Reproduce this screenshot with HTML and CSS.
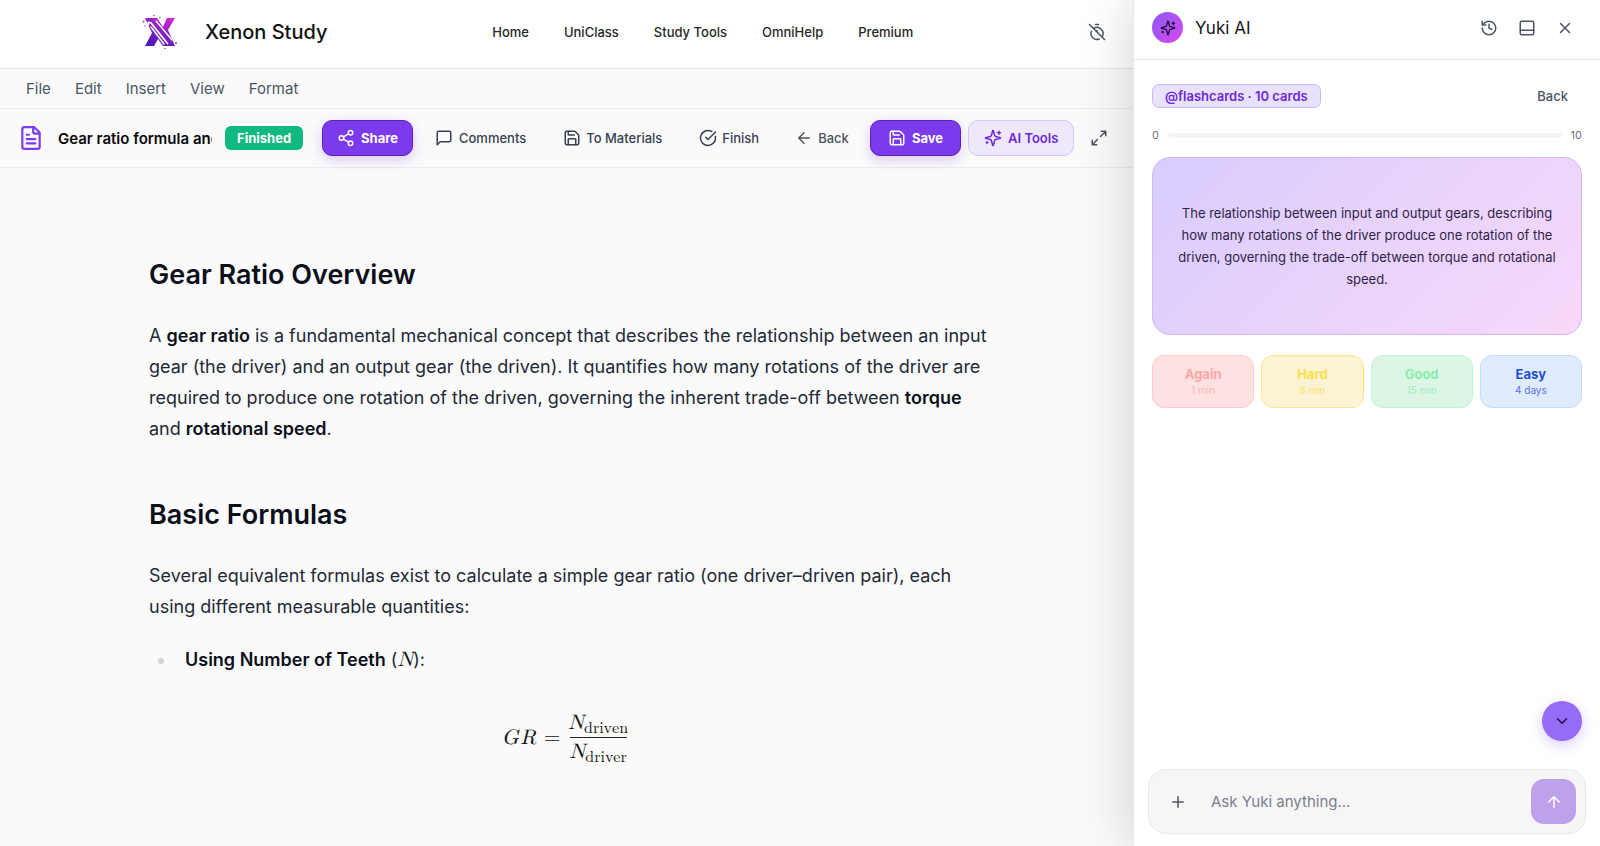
FILE: index.html
```html
<!DOCTYPE html>
<html lang="en">
<head>
<meta charset="utf-8">
<meta name="viewport" content="width=device-width, initial-scale=1">
<title>Xenon Study</title>
<link rel="stylesheet" href="styles.css">
</head>
<body>
<svg class="defs" aria-hidden="true">
  <symbol id="sparkles" viewBox="0 0 24 24"><path d="M9.9 15.5A2 2 0 0 0 8.5 14.1l-6.1-1.6a.5.5 0 0 1 0-1L8.500 9.900A2 2 0 0 0 9.900 8.500l1.600-6.100a.5.5 0 0 1 1 0L14.100 8.500A2 2 0 0 0 15.500 9.900l6.100 1.600a.5.5 0 0 1 0 1L15.500 14.100a2 2 0 0 0-1.400 1.400l-1.600 6.100a.5.5 0 0 1-1 0z"/><path d="M20 3v4M22 5h-4M4 17v2M5 18H3"/></symbol>
  <symbol id="save" viewBox="0 0 24 24"><path d="M15.200 3a2 2 0 0 1 1.400.6l3.800 3.800a2 2 0 0 1 .6 1.400V19a2 2 0 0 1-2 2H5a2 2 0 0 1-2-2V5a2 2 0 0 1 2-2z"/><path d="M17 21v-7a1 1 0 0 0-1-1H8a1 1 0 0 0-1 1v7M7 3v4a1 1 0 0 0 1 1h7"/></symbol>
</svg>
<div class="app">
  <div class="workspace">
    <header class="site-header">
      <a class="brand" href="#">
        <svg class="brand-logo" viewBox="0 0 36 36" aria-hidden="true">
          <defs><linearGradient id="xg" gradientUnits="userSpaceOnUse" x1="28" y1="3" x2="12" y2="32"><stop offset="0" stop-color="#d926d9"/><stop offset=".5" stop-color="#8a1fc0"/><stop offset="1" stop-color="#4a18b8"/></linearGradient></defs>
          <path fill="url(#xg)" d="M3 4h12l6 9 4-9h8l-7 12 7 16H21l-5-7-4 7H3l7-13z"/>
          <path d="M6.500 10.500Q5 7.500 9 9L25.500 29.500" fill="none" stroke="#fff" stroke-width="1.800" stroke-linecap="round"/>
          <path d="M9 13 22 30" stroke="#fff" stroke-width="1.500" stroke-linecap="round"/>
          <path d="M14 7 30 26" stroke="#fff" stroke-width="1.300" stroke-linecap="round"/>
          <g fill="#a03bd6"><circle cx="1.500" cy="7.500" r="1"/><circle cx="12" cy="1.500" r=".8"/><circle cx="18" cy="3.500" r=".8"/><circle cx="34" cy="29" r="1"/><circle cx="23" cy="34.500" r=".8"/><circle cx="3" cy="12" r=".7"/></g>
        </svg>
        <span>Xenon Study</span>
      </a>
      <nav class="site-nav">
        <a href="#">Home</a><a href="#">UniClass</a><a href="#">Study Tools</a><a href="#">OmniHelp</a><a href="#">Premium</a>
      </nav>
      <button class="icon-button timer" aria-label="Timer off"><svg class="icon i18" viewBox="0 0 24 24"><path d="M10 2h4M4.600 11a8 8 0 0 0 1.700 8.700 8 8 0 0 0 8.700 1.700M7.400 7.400a8 8 0 0 1 10.300 1 8 8 0 0 1 .9 10.200M2 2l20 20M12 12v-2"/></svg></button>
    </header>
    <nav class="menu-bar">
      <button>File</button><button>Edit</button><button>Insert</button><button>View</button><button>Format</button>
    </nav>
    <div class="toolbar">
      <svg class="icon doc-icon" viewBox="0 0 24 24" aria-hidden="true"><path d="M15 2H6a2 2 0 0 0-2 2v16a2 2 0 0 0 2 2h12a2 2 0 0 0 2-2V7zM14 2v4a2 2 0 0 0 2 2h4M10 9H8M16 13H8M16 17H8"/></svg>
      <input class="doc-title" aria-label="Document title" value="Gear ratio formula and calculations">
      <span class="status">Finished</span>
      <button class="btn primary"><svg class="icon i18" viewBox="0 0 24 24"><circle cx="18" cy="5" r="3"/><circle cx="6" cy="12" r="3"/><circle cx="18" cy="19" r="3"/><path d="m8.600 13.500 6.800 4M15.400 6.500l-6.800 4"/></svg>Share</button>
      <button class="btn"><svg class="icon i18" viewBox="0 0 24 24"><path d="M21 15a2 2 0 0 1-2 2H7l-4 4V5a2 2 0 0 1 2-2h14a2 2 0 0 1 2 2z"/></svg>Comments</button>
      <button class="btn compact"><svg class="icon i18"><use href="#save"/></svg>To Materials</button>
      <button class="btn compact"><svg class="icon i18" viewBox="0 0 24 24"><path d="M21.800 10A10 10 0 1 1 17 3.300"/><path d="m9 11 3 3L22 4"/></svg>Finish</button>
      <button class="btn compact back"><svg class="icon i18" viewBox="0 0 24 24"><path d="m12 19-7-7 7-7M19 12H5"/></svg>Back</button>
      <button class="btn primary save"><svg class="icon i18"><use href="#save"/></svg>Save</button>
      <button class="btn tools"><svg class="icon i18"><use href="#sparkles"/></svg>AI Tools</button>
      <button class="icon-button expand" aria-label="Full screen"><svg class="icon i18" viewBox="0 0 24 24"><path d="M15 3h6v6M21 3l-7 7M3 21l7-7M9 21H3v-6"/></svg></button>
    </div>
    <main class="document">
      <h2>Gear Ratio Overview</h2>
      <p>A <strong>gear ratio</strong> is a fundamental mechanical concept that describes the relationship between an input gear (the driver) and an output gear (the driven). It quantifies how many rotations of the driver are required to produce one rotation of the driven, governing the inherent trade-off between <strong>torque</strong> and <strong>rotational speed</strong>.</p>
      <h2>Basic Formulas</h2>
      <p>Several equivalent formulas exist to calculate a simple gear ratio (one driver–driven pair), each using different measurable quantities:</p>
      <ul>
        <li><strong>Using Number of Teeth</strong> (<i class="math">N</i>):</li>
      </ul>
      <div class="formula math">
        <span class="symbols"><i>G</i><i>R</i></span><span>=</span>
        <span class="fraction"><span><i>N</i><sub>driven</sub></span><span class="denominator"><i>N</i><sub>driver</sub></span></span>
      </div>
    </main>
  </div>
  <aside class="assistant">
    <header class="assistant-header">
      <span class="avatar"><svg class="icon i16"><use href="#sparkles"/></svg></span>
      <h1>Yuki AI</h1>
      <div class="assistant-actions">
        <button class="icon-button" aria-label="History"><svg class="icon i18" viewBox="0 0 24 24"><path d="M3 12a9 9 0 1 0 9-9 9.800 9.800 0 0 0-6.700 2.700L3 8M3 3v5h5M12 7v5l4 2"/></svg></button>
        <button class="icon-button" aria-label="Dock panel"><svg class="icon i18" viewBox="0 0 24 24"><rect x="3" y="3" width="18" height="18" rx="2"/><path d="M3 15h18"/></svg></button>
        <button class="icon-button" aria-label="Close"><svg class="icon i18" viewBox="0 0 24 24"><path d="M18 6 6 18M6 6l12 12"/></svg></button>
      </div>
    </header>
    <section class="deck">
      <div class="deck-head"><span class="tag">@flashcards · 10 cards</span><button class="deck-back">Back</button></div>
      <div class="progress"><span>0</span><div class="track"></div><span>10</span></div>
      <div class="flashcard">The relationship between input and output gears, describing how many rotations of the driver produce one rotation of the driven, governing the trade-off between torque and rotational speed.</div>
      <div class="ratings">
        <button class="again"><b>Again</b><small>1 min</small></button>
        <button class="hard"><b>Hard</b><small>8 min</small></button>
        <button class="good"><b>Good</b><small>15 min</small></button>
        <button class="easy"><b>Easy</b><small>4 days</small></button>
      </div>
    </section>
    <div class="assistant-footer">
      <button class="scroll-down" aria-label="Scroll down"><svg class="icon i18" viewBox="0 0 24 24"><path d="m6 9 6 6 6-6"/></svg></button>
      <form class="composer">
        <button type="button" class="icon-button" aria-label="Add attachment"><svg class="icon i18" viewBox="0 0 24 24"><path d="M5 12h14M12 5v14"/></svg></button>
        <input aria-label="Message" placeholder="Ask Yuki anything...">
        <button type="button" class="send" aria-label="Send"><svg class="icon i18" viewBox="0 0 24 24"><path d="m5 12 7-7 7 7M12 19V5"/></svg></button>
      </form>
    </div>
  </aside>
</div>
</body>
</html>
```
FILE: styles.css
```css
* { box-sizing: border-box; }
body { margin: 0; font-family: Inter, "Liberation Sans", sans-serif; font-optical-sizing: none; color: #1f2937; background: #fafafa; }
button, input { font: inherit; font-optical-sizing: inherit; color: inherit; border: 0; background: none; padding: 0; }
button { cursor: pointer; }
a { color: inherit; text-decoration: none; }
.defs { position: absolute; width: 0; height: 0; }
.icon { flex: none; display: block; fill: none; stroke: currentColor; stroke-width: 2; stroke-linecap: round; stroke-linejoin: round; }
.i16 { width: 16px; height: 16px; }
.i18 { width: 18px; height: 18px; }
.icon-button { display: flex; align-items: center; justify-content: center; width: 38px; height: 38px; color: #4b5563; }

.app { display: flex; height: 100vh; overflow: hidden; }
.workspace { flex: 1; min-width: 0; display: flex; flex-direction: column; }

.site-header { display: flex; align-items: center; height: 69px; padding: 0 17px 4px 142px; background: #fff; border-bottom: 1px solid #e5e7eb; }
.brand { display: flex; align-items: center; gap: 27px; font-size: 20px; font-weight: 500; font-optical-sizing: auto; color: #111; }
.brand-logo { width: 36px; height: 36px; }
.site-nav { display: flex; gap: 35px; margin: 0 auto; font-size: 13px; font-weight: 500; color: #27272a; }
.menu-bar { display: flex; align-items: center; gap: 24px; height: 40px; padding: 0 26px; border-bottom: 1px solid #ececef; font-size: 15px; color: #4b5563; }
.toolbar { display: flex; align-items: center; gap: 7px; height: 59px; padding: 0 17px; border-bottom: 1px solid #ececef; font-size: 13px; }
.doc-icon { width: 28px; height: 26px; color: #7c3aed; }
.doc-title { width: 154px; margin: 0 6px; font-size: 15px; font-weight: 600; color: #09090b; }
.status { margin-right: 12px; padding: 4px 12px; border-radius: 6px; background: #10b981; color: #fff; font-size: 13px; font-weight: 700; line-height: 16px; }
.btn { display: flex; align-items: center; gap: 6px; height: 36px; padding: 0 15px; border-radius: 10px; font-weight: 500; color: #374151; white-space: nowrap; }
.compact { gap: 5px; }
.back { padding: 0 14px; color: #4b5563; }
.primary { padding: 0 14px; background: #7c3aed; color: #fff; font-weight: 700; border: 1px solid #5b21b6; box-shadow: 0 4px 12px #7c3aed40; }
.save { padding: 0 17px; }
.tools { border: 1px solid #d4c5fb; background: #efe8fb; color: #6d28d9; font-weight: 600; }
.expand { margin-left: auto; }

.document { flex: 1; min-height: 0; overflow: hidden; padding: 87px 143px 0 149px; font-size: 18px; font-optical-sizing: auto; line-height: 31px; }
.document h2 { margin: 0 0 25px; font-size: 27px; line-height: 40px; font-weight: 600; color: #0b0f1a; }
.document p { margin: 0 0 51px; }
.document strong { font-weight: 600; color: #0b0f1a; }
.document p + ul { margin: -29px 0 0; padding-left: 9px; list-style: none; }
.document li { display: block; }
.document li::before { content: ""; display: inline-block; width: 6px; height: 6px; margin-right: 21px; border-radius: 50%; background: #d4d4d8; vertical-align: 2px; }
.math { font-family: "Latin Modern Math", "Liberation Serif", serif; font-size: 21px; line-height: 1; color: #111; }
.formula { display: flex; align-items: center; justify-content: center; gap: 8px; margin-top: 34px; padding-right: 9px; }
.symbols { display: flex; gap: 2px; }
.fraction { display: flex; flex-direction: column; align-items: center; line-height: 28px; }
.denominator { border-top: 1px solid #222; }
.fraction sub { font-size: 16px; line-height: 1; vertical-align: -4px; }

.assistant { position: relative; flex: 0 0 467px; display: flex; flex-direction: column; background: #fff; border-left: 1px solid #e5e7eb; box-shadow: -4px 0 48px #00000028; }
.assistant-header { display: flex; align-items: center; height: 60px; padding: 0 16px 4px 18px; border-bottom: 1px solid #e5e7eb; }
.avatar { display: grid; place-items: center; width: 31px; height: 31px; border-radius: 50%; background: linear-gradient(135deg, #8b5cf6, #d946ef); color: #1e1038; }
.assistant h1 { margin: 0 0 0 12px; font-size: 17px; font-weight: 400; color: #18181b; }
.assistant-actions { display: flex; margin-left: auto; }
.deck { padding: 24px 18px; }
.deck-head { display: flex; justify-content: space-between; align-items: center; }
.tag { padding: 3px 12px; border: 1px solid #c9b8fb; border-radius: 7px; background: #e9e2fd; color: #6d28d9; font-size: 13px; font-weight: 600; line-height: 16px; }
.deck-back { padding: 0 14px; font-size: 13px; font-weight: 500; color: #4b5563; }
.progress { display: flex; align-items: center; gap: 9px; height: 49px; padding-top: 5px; font-size: 11px; color: #6b7280; }
.track { flex: 1; height: 5px; border-radius: 3px; background: #f4f4f5; }
.flashcard { display: flex; align-items: center; min-height: 178px; padding: 18px 20px; border: 1px solid #d0b8f5; border-radius: 18px; background: linear-gradient(135deg, #d8ccff, #e8d3fb 50%, #f8d8fa); font-size: 13px; line-height: 22px; text-align: center; color: #2e1f4a; }
.ratings { display: grid; grid-template-columns: repeat(4, 1fr); gap: 7px; margin-top: 20px; }
.ratings button { display: flex; flex-direction: column; align-items: center; justify-content: center; height: 53px; padding-bottom: 2px; border: 1px solid; border-radius: 12px; }
.ratings b { font-size: 13px; line-height: 18px; font-weight: 700; }
.ratings small { font-size: 10px; line-height: 14px; opacity: .75; }
.ratings .again { background: #fee2e2; border-color: #fecaca; color: #fca5a5; }
.ratings .hard { background: #fcf3d4; border-color: #fde68a; color: #fde047; }
.ratings .good { background: #dcf5e4; border-color: #bbf7d0; color: #86efac; }
.ratings .easy { background: #e0ebfd; border-color: #bfdbfe; color: #1d4ed8; }
.assistant-footer { display: flex; flex-direction: column; align-items: flex-end; gap: 28px; margin-top: auto; padding: 0 14px 12px; }
.scroll-down { display: grid; place-items: center; width: 40px; height: 40px; margin-right: 4px; border-radius: 50%; background: #956bf7; color: #1e1038; box-shadow: 0 4px 14px #8b5cf650; }
.composer { display: flex; align-items: center; width: 100%; height: 65px; padding: 0 9px 0 10px; border: 1px solid #e8e8ea; border-radius: 18px; background: #f6f6f6; }
.composer input { flex: 1; min-width: 0; margin-left: 14px; font-size: 15px; outline: 0; }
.composer input::placeholder { color: #7b8090; opacity: 1; }
.send { display: grid; place-items: center; width: 45px; height: 45px; border-radius: 13px; background: #bda1eb; color: #fff; }
```
